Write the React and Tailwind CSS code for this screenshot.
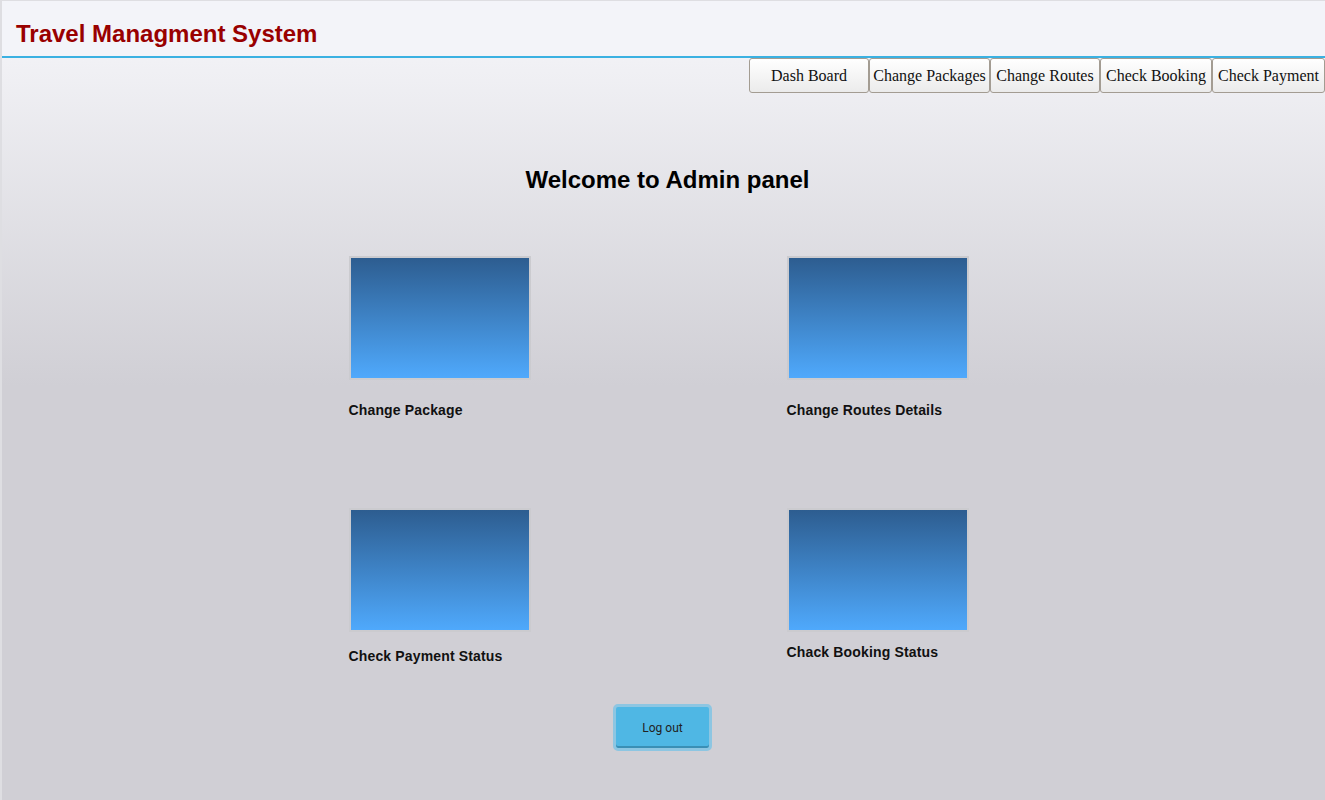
import React from 'react';

const navItems = [
  { label: 'Dash Board', width: 'w-[120px]' },
  { label: 'Change Packages', width: 'w-[121px]' },
  { label: 'Change Routes', width: 'w-[110px]' },
  { label: 'Check Booking', width: 'w-[112px]' },
  { label: 'Check Payment', width: 'w-[113px]' },
];

const Tile = ({ label, labelGap }) => (
  <div className="flex flex-col items-start">
    <div className="w-[182px] h-[124px] border-2 border-[#cbcbcf] bg-[linear-gradient(to_bottom,#2d5d90,#4fa9fc)]" />
    <p className={`${labelGap} text-[14px] leading-[16px] font-bold tracking-[0.15px] text-[#111]`}>{label}</p>
  </div>
);

export default function App() {
  return (
    <div
      className="min-h-[800px] border-l-2 border-t border-[#dedee2] bg-[linear-gradient(to_bottom,#f5f5f9_0px,#f1f1f5_60px,#d0cfd5_385px,#d0cfd5_100%)]"
      style={{ fontFamily: '"Liberation Sans", Arial, sans-serif' }}
    >
      <header className="h-[57px] bg-[#f3f4f9] border-b-2 border-[#3bb1e2] flex items-center pl-[14px]">
        <h1 className="text-[24px] font-bold text-[#990000] leading-none mt-[10px]">Travel Managment System</h1>
      </header>

      <nav className="flex justify-end">
        {navItems.map((item) => (
          <button
            key={item.label}
            className={`${item.width} h-[35px] border border-[#a39c92] rounded-[3px] bg-[linear-gradient(to_bottom,#ffffff,#ebebeb)] text-[16px] text-[#111] whitespace-nowrap`}
            style={{ fontFamily: '"Liberation Serif", "Times New Roman", serif' }}
          >
            {item.label}
          </button>
        ))}
      </nav>

      <h2 className="mt-[73px] pl-[8px] text-center text-[24px] leading-[28px] font-bold text-black">Welcome to Admin panel</h2>

      <div className="mx-auto mt-[62px] w-[628px] grid grid-cols-[438px_190px] grid-rows-[252px_196px] -translate-x-[1px]">
        <Tile label="Change Package" labelGap="mt-[22px]" />
        <Tile label="Change Routes Details" labelGap="mt-[22px]" />
        <Tile label="Check Payment Status" labelGap="mt-[16px]" />
        <Tile label="Chack Booking Status" labelGap="mt-[12px]" />
      </div>

      <div className="flex justify-center -translate-x-[1px]">
        <button className="w-[99px] h-[47px] rounded-[5px] border-[3px] border-[#8dc6e2] bg-[#4fb7e4] shadow-[inset_0_-2px_0_#3a8fb5] text-[12px] text-[#222]" style={{ fontFamily: 'Roboto, sans-serif' }}>
          Log out
        </button>
      </div>
    </div>
  );
}
